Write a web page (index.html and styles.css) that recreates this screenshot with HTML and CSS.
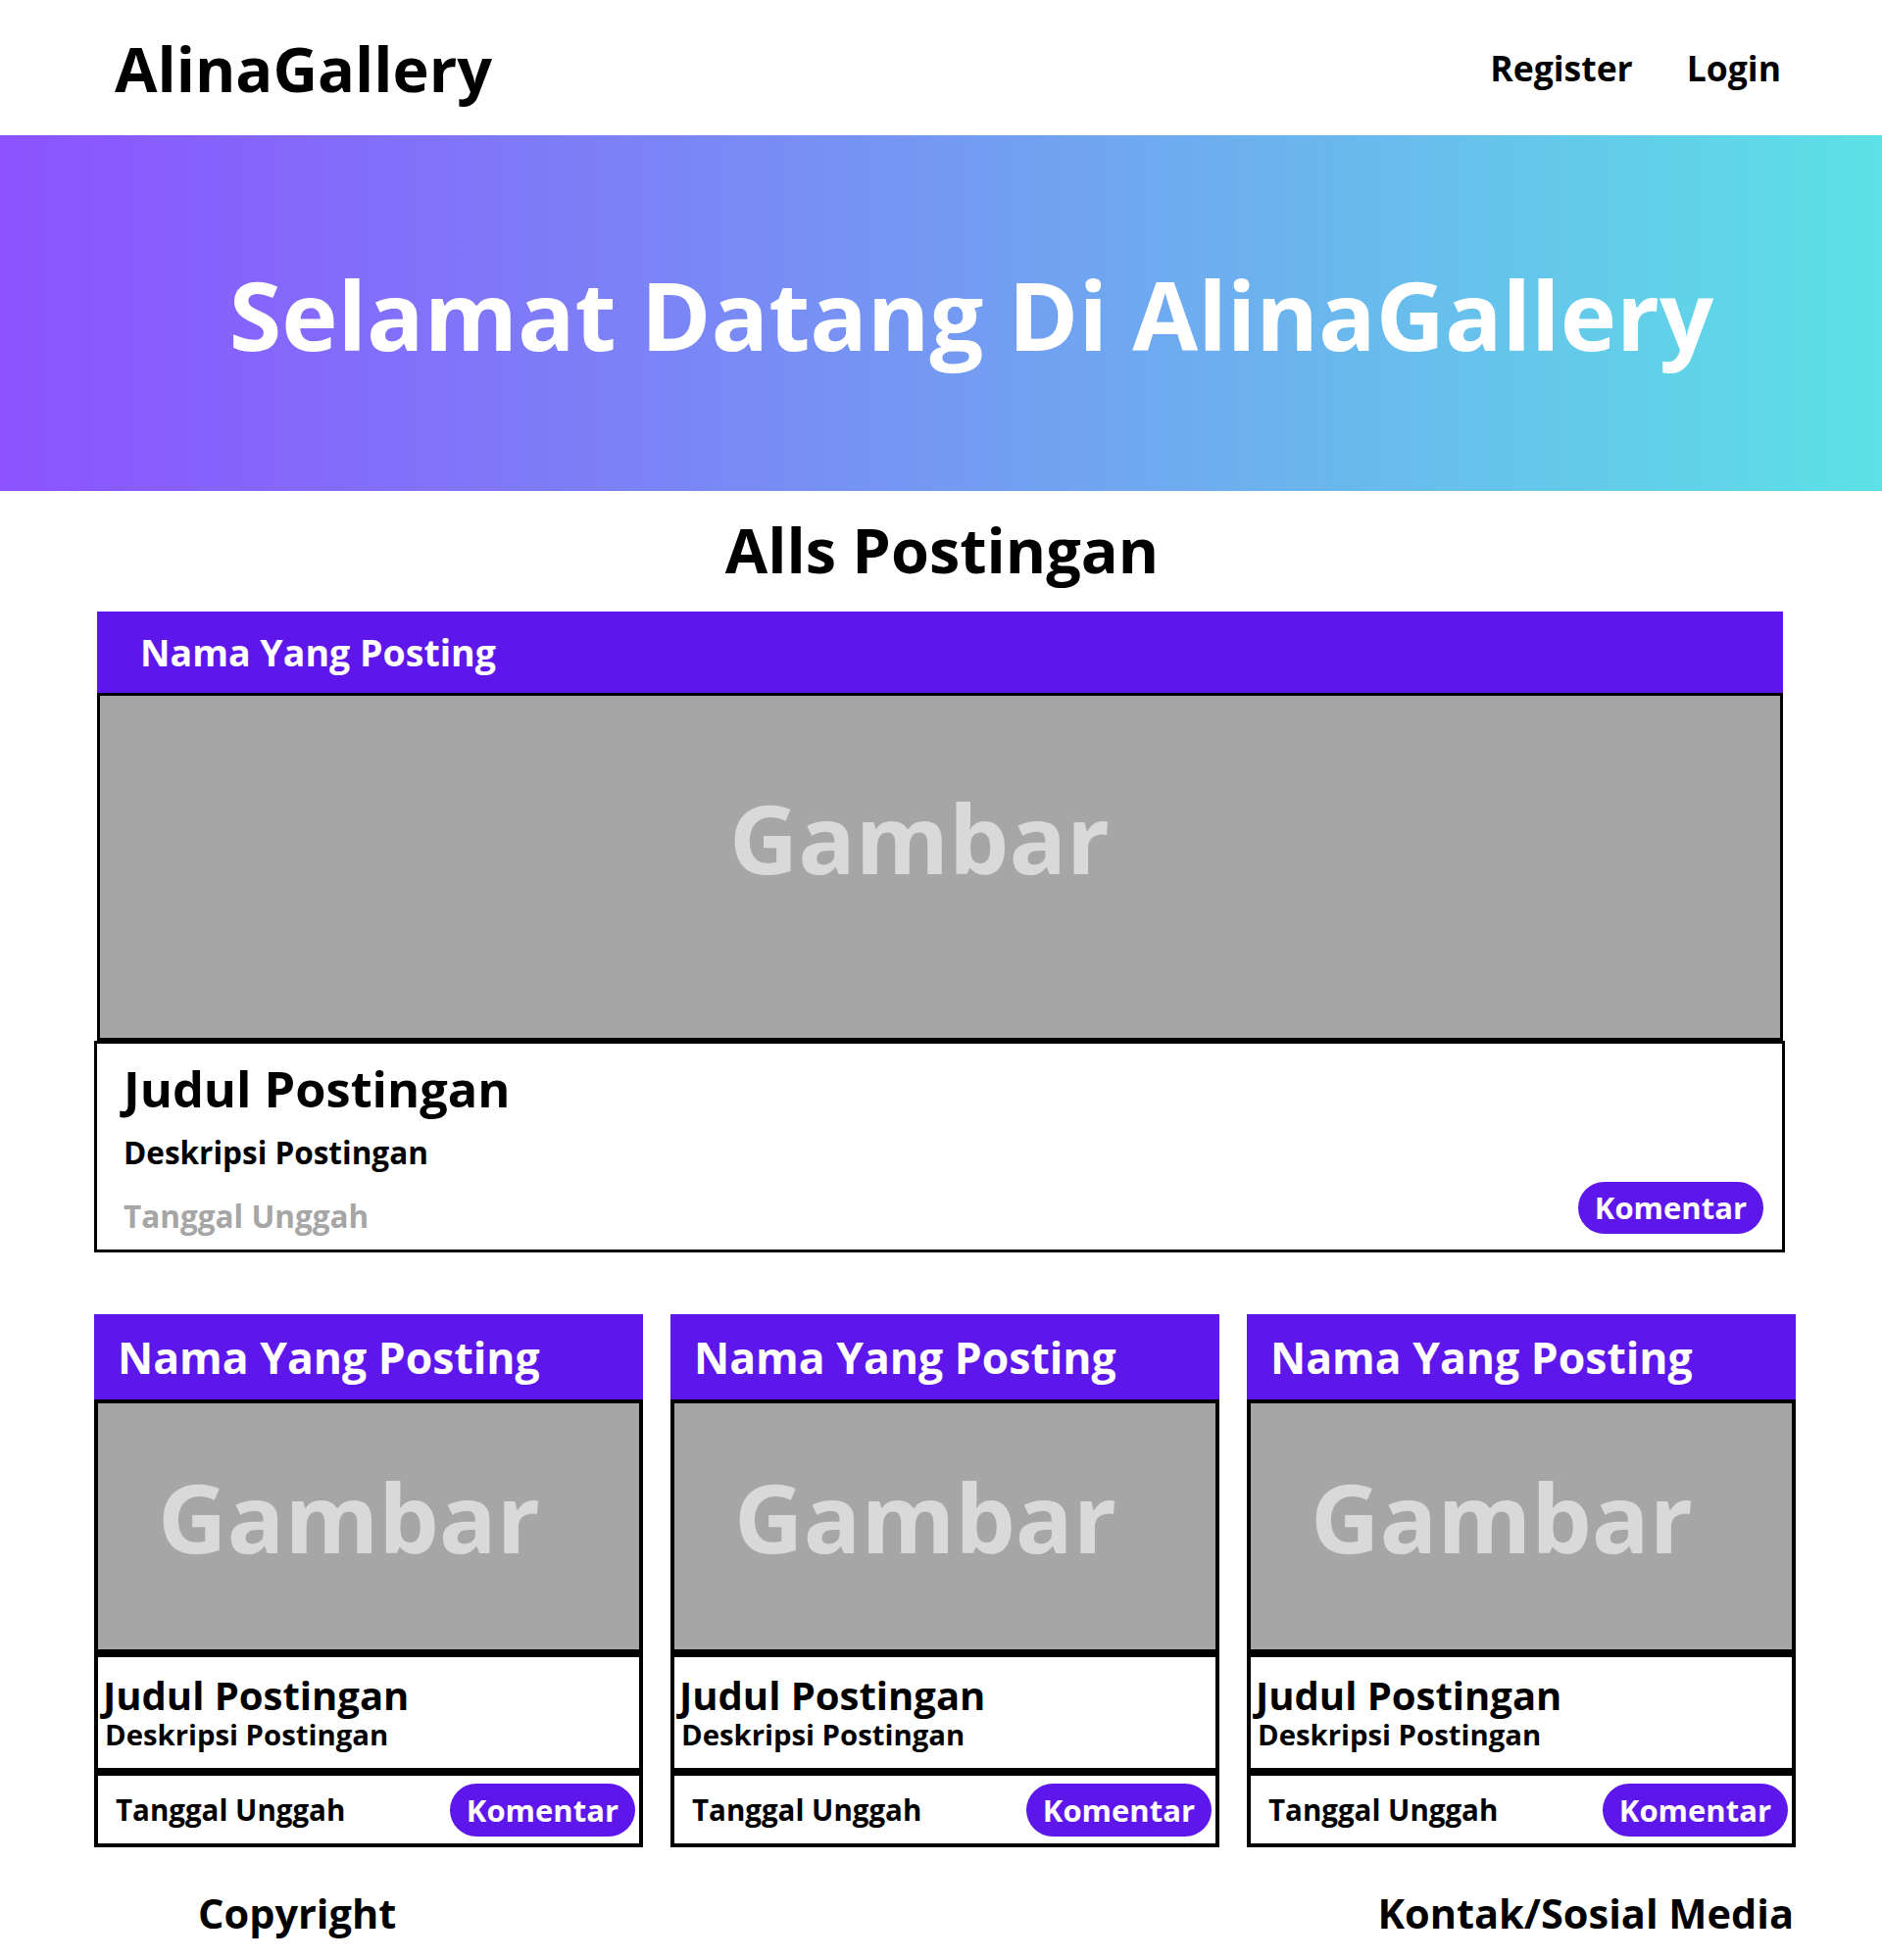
FILE: index.html
```html
<!DOCTYPE html>
<html lang="id">
<head>
<meta charset="utf-8">
<title>AlinaGallery</title>
<link rel="stylesheet" href="styles.css">
</head>
<body>
<header class="topbar">
  <div class="logo">AlinaGallery</div>
  <nav class="nav">
    <a class="nav-link" href="#">Register</a>
    <a class="nav-link" href="#">Login</a>
  </nav>
</header>

<section class="hero">
  <h1 class="hero-title">Selamat Datang Di AlinaGallery</h1>
</section>

<main class="content">
  <h2 class="section-title">Alls Postingan</h2>

  <article class="feature">
    <div class="feature-head">Nama Yang Posting</div>
    <div class="feature-image">Gambar</div>
    <div class="feature-body">
      <h3 class="feature-title">Judul Postingan</h3>
      <p class="feature-desc">Deskripsi Postingan</p>
      <div class="feature-meta">
        <span class="feature-date">Tanggal Unggah</span>
        <button class="btn btn-feature">Komentar</button>
      </div>
    </div>
  </article>

  <div class="grid">
    <article class="card">
      <div class="card-head">Nama Yang Posting</div>
      <div class="card-image">Gambar</div>
      <div class="card-body">
        <h3 class="card-title">Judul Postingan</h3>
        <p class="card-desc">Deskripsi Postingan</p>
      </div>
      <div class="card-meta">
        <span class="card-date">Tanggal Unggah</span>
        <button class="btn">Komentar</button>
      </div>
    </article>
    <article class="card">
      <div class="card-head">Nama Yang Posting</div>
      <div class="card-image">Gambar</div>
      <div class="card-body">
        <h3 class="card-title">Judul Postingan</h3>
        <p class="card-desc">Deskripsi Postingan</p>
      </div>
      <div class="card-meta">
        <span class="card-date">Tanggal Unggah</span>
        <button class="btn">Komentar</button>
      </div>
    </article>
    <article class="card">
      <div class="card-head">Nama Yang Posting</div>
      <div class="card-image">Gambar</div>
      <div class="card-body">
        <h3 class="card-title">Judul Postingan</h3>
        <p class="card-desc">Deskripsi Postingan</p>
      </div>
      <div class="card-meta">
        <span class="card-date">Tanggal Unggah</span>
        <button class="btn">Komentar</button>
      </div>
    </article>
  </div>

  <footer class="footer">
    <span class="footer-item">Copyright</span>
    <span class="footer-item">Kontak/Sosial Media</span>
  </footer>
</main>
</body>
</html>
```

FILE: styles.css
```css
* {
  box-sizing: border-box;
}

body {
  margin: 0;
  background: #ffffff;
  color: #000000;
  font-family: "Open Sans", "Noto Sans", sans-serif;
  font-weight: 700;
}

/* ---------- top bar ---------- */
.topbar {
  height: 138px;
  display: flex;
  align-items: center;
  justify-content: space-between;
  padding: 0 103px 0 117px;
}

.logo {
  font-size: 63px;
  line-height: 87px;
}

.nav {
  display: flex;
  gap: 55px;
}

.nav-link {
  font-size: 35.5px;
  line-height: 49px;
  color: #000000;
  text-decoration: none;
}

/* ---------- hero ---------- */
.hero {
  height: 363px;
  display: flex;
  align-items: center;
  justify-content: center;
  padding-left: 62px;
  background: linear-gradient(90deg, #8c52ff 0%, #5ce1e6 100%);
}

.hero-title {
  margin: 0;
  font-size: 97px;
  line-height: 136px;
  color: #ffffff;
  font-weight: 700;
}

/* ---------- content ---------- */
.content {
  width: 1832px;
  padding-left: 96px;
}

.section-title {
  margin: 16px 0 19px;
  font-size: 63px;
  line-height: 88px;
  text-align: center;
  font-weight: 700;
  padding-right: 6px;
}

/* ---------- feature post ---------- */
.feature {
  width: 1725px;
}

.feature-head {
  height: 83px;
  margin: 0 2px 0 3px;
  background: #5e17eb;
  color: #ffffff;
  font-size: 37.5px;
  line-height: 83px;
  padding-left: 44px;
}

.feature-image {
  height: 355px;
  margin: 0 2px 0 3px;
  border: 3px solid #000000;
  background: #a6a6a6;
  color: #d9d9d9;
  font-size: 97px;
  display: flex;
  align-items: center;
  justify-content: center;
  padding: 0 42px 62px 0;
}

.feature-body {
  border: 3px solid #000000;
  padding: 16px 19px 13px 27px;
  display: flex;
  flex-direction: column;
}

.feature-title {
  margin: 0;
  font-size: 50.5px;
  line-height: 60px;
  font-weight: 700;
}

.feature-desc {
  margin: 15px 0 11px;
  font-size: 31.5px;
  line-height: 40px;
}

.feature-meta {
  display: flex;
  justify-content: space-between;
  align-items: flex-end;
  height: 55px;
}

.feature-date {
  font-size: 31.5px;
  line-height: 42px;
  color: #a6a6a6;
}

.btn {
  height: 54px;
  padding: 0 17px;
  border: none;
  border-radius: 27px;
  background: #5e17eb;
  color: #ffffff;
  font-family: "Open Sans", "Noto Sans", sans-serif;
  font-weight: 700;
  font-size: 31px;
  line-height: 54px;
}

.btn-feature {
  height: 53px;
  line-height: 53px;
  margin-bottom: 3px;
}

/* ---------- grid ---------- */
.grid {
  margin-top: 63px;
  display: grid;
  grid-template-columns: repeat(3, 560px);
  column-gap: 28px;
}

.card {
  display: flex;
  flex-direction: column;
}

.card-head {
  height: 87px;
  background: #5e17eb;
  color: #ffffff;
  font-size: 44.5px;
  line-height: 87px;
  padding-left: 24px;
}

.card-image {
  height: 259px;
  border: 4px solid #000000;
  background: #a6a6a6;
  color: #d9d9d9;
  font-size: 97.5px;
  display: flex;
  align-items: center;
  justify-content: center;
  padding: 0 40px 20px 0;
}

.card-body {
  border: 4px solid #000000;
  padding: 16px 8px 17px 5px;
}

.card-title {
  margin: 0;
  font-size: 40px;
  line-height: 46px;
  font-weight: 700;
}

.card-desc {
  margin: 0;
  padding-left: 2px;
  font-size: 29.3px;
  line-height: 34px;
}

.card-meta {
  height: 77px;
  border: 4px solid #000000;
  display: flex;
  align-items: center;
  justify-content: space-between;
  padding: 0 4px 0 18px;
}

.card-date {
  font-size: 29.5px;
  line-height: 40px;
}

/* ---------- footer ---------- */
.footer {
  margin-top: 39px;
  display: flex;
  justify-content: space-between;
  padding: 0 2px 0 106px;
}

.footer-item {
  font-size: 41.5px;
  line-height: 57px;
}
```
